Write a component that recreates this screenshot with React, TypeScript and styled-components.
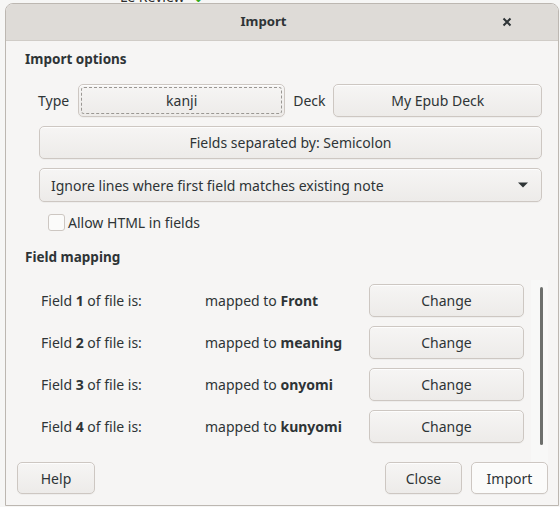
import React from "react";
import styled, { createGlobalStyle } from "styled-components";

const Global = createGlobalStyle`
  html, body { margin: 0; padding: 0; background: #f4f4f3; }
  body { font-family: "Noto Sans", "DejaVu Sans", sans-serif; font-size: 14px; color: #2e3436; }
  * { box-sizing: border-box; }
`;

const Page = styled.div`
  width: 560px;
  height: 507px;
  overflow: hidden;
  display: flex;
  flex-direction: column;
  background: #f6f6f5;
`;

const Backdrop = styled.div`
  height: 3px;
  overflow: hidden;
  padding-left: 120px;
  display: flex;
  align-items: flex-end;
  font-size: 14px;
  line-height: 14px;
  color: #2e2e2e;
`;

const BackdropText = styled.span`
  margin-bottom: -1px;
  & b { color: #33aa22; margin-left: 8px; }
`;

const Window = styled.div`
  margin-left: 5px;
  width: 554px;
  height: 503px;
  border: 1px solid #bcb7b1;
  border-radius: 8px 8px 0 0;
  background: #f6f5f4;
  display: flex;
  flex-direction: column;
  overflow: hidden;
`;

const TitleBar = styled.div`
  height: 37px;
  flex: none;
  background: #dedbd7;
  border-bottom: 1px solid #d0ccc7;
  display: flex;
  align-items: center;
  padding-bottom: 2px;
`;

const Title = styled.div`
  flex: 1;
  text-align: center;
  padding-left: 23px;
  font-weight: 700;
  font-size: 13.2px;
  color: #2e3436;
`;

const CloseBtn = styled.div`
  width: 18px;
  height: 18px;
  margin-right: 42px;
  display: flex;
  align-items: center;
  justify-content: center;
  padding-top: 2px;
`;

const Body = styled.div`
  flex: 1;
  display: flex;
  flex-direction: column;
  padding: 0 10px 0 11px;
`;

const Heading = styled.div<{ $top: number }>`
  font-weight: 700;
  font-size: 13.5px;
  line-height: 20px;
  margin: ${(p) => p.$top}px 0 0 8px;
`;

const Options = styled.div`
  display: flex;
  flex-direction: column;
  padding: 0 6px 0 22px;
  margin-top: 15px;
  gap: 9px;
`;

const Row = styled.div`
  display: flex;
  align-items: center;
`;

const Label = styled.span<{ $after: number; $before?: number }>`
  margin: 0 ${(p) => p.$after}px 0 ${(p) => p.$before ?? 0}px;
  white-space: nowrap;
`;

const Button = styled.button<{ $w?: number; $h?: number; $default?: boolean; $focus?: boolean }>`
  font: inherit;
  color: #2e3436;
  height: ${(p) => p.$h ?? 33}px;
  width: ${(p) => (p.$w ? `${p.$w}px` : "auto")};
  flex: ${(p) => (p.$w ? "none" : "1")};
  border: 1px solid #cdc7c2;
  border-radius: 5px;
  background: ${(p) => (p.$default ? "#fbfbfa" : "linear-gradient(#f6f5f4, #edebe9)")};
  box-shadow: inset 0 1px 0 rgba(255, 255, 255, 0.8), 0 1px 0 rgba(0, 0, 0, 0.03);
  padding: 0;
  position: relative;
  display: flex;
  align-items: center;
  justify-content: center;
  ${(p) =>
    p.$focus
      ? `&::after { content: ""; position: absolute; inset: 2px; border: 1px dashed #9a9793; border-radius: 3px; }`
      : ""}
`;

const Combo = styled(Button)`
  justify-content: space-between;
  padding: 0 12px 0 11px;
`;

const CheckRow = styled.label`
  display: flex;
  align-items: center;
  margin: 2px 0 0 9px;
  gap: 3px;
`;

const CheckBox = styled.span`
  width: 17px;
  height: 17px;
  border: 1px solid #cdc7c2;
  border-radius: 3px;
  background: #fbfbfa;
`;

const Mapping = styled.div`
  display: flex;
  margin-top: 17px;
  height: 173px;
`;

const MapList = styled.div`
  flex: 1;
  display: flex;
  flex-direction: column;
  gap: 9px;
  padding-left: 24px;
`;

const MapRow = styled.div`
  display: grid;
  grid-template-columns: 164px 164px 155px;
  align-items: center;
  height: 33px;
`;

const Bold = styled.b`
  font-weight: 700;
`;

const ScrollTrack = styled.div`
  width: 17px;
  margin-left: 4px;
  margin-top: -4px;
  margin-bottom: -10px;
  background: #f8f8f7;
  display: flex;
  justify-content: center;
  padding: 7px 0 0;
`;

const ScrollThumb = styled.div`
  width: 3px;
  height: 158px;
  border-radius: 2px;
  background: #6d6f6c;
  margin-left: 4px;
`;

const Footer = styled.div`
  display: flex;
  align-items: center;
  margin-top: auto;
  padding: 0 0 11px 0;
  gap: 9px;
`;

const Spacer = styled.div`
  flex: 1;
`;

const rows = [
  { n: "1", to: "Front" },
  { n: "2", to: "meaning" },
  { n: "3", to: "onyomi" },
  { n: "4", to: "kunyomi" },
];

export default function App() {
  return (
    <Page>
      <Global />
      <Backdrop>
        <BackdropText>
          Le Review<b>↓</b>
        </BackdropText>
      </Backdrop>
      <Window>
        <TitleBar>
          <Title>Import</Title>
          <CloseBtn>
            <svg width="10" height="10" viewBox="0 0 10 10">
              <path d="M1.5 1.5 L8.5 8.5 M8.5 1.5 L1.5 8.5" stroke="#2e3436" strokeWidth="2" />
            </svg>
          </CloseBtn>
        </TitleBar>
        <Body>
          <Heading $top={8}>Import options</Heading>
          <Options>
            <Row>
              <Label $after={9} $before={-1}>Type</Label>
              <Button $w={207} $focus>kanji</Button>
              <Label $after={8} $before={8}>Deck</Label>
              <Button>My Epub Deck</Button>
            </Row>
            <Row>
              <Button>Fields separated by: Semicolon</Button>
            </Row>
            <Row>
              <Combo $h={34}>
                <span>Ignore lines where first field matches existing note</span>
                <svg width="12" height="8" viewBox="0 0 12 8">
                  <path d="M1 1.5 H11 L6 6.5 Z" fill="#2e3436" />
                </svg>
              </Combo>
            </Row>
            <CheckRow>
              <CheckBox />
              <span>Allow HTML in fields</span>
            </CheckRow>
          </Options>
          <Heading $top={15}>Field mapping</Heading>
          <Mapping>
            <MapList>
              {rows.map((r) => (
                <MapRow key={r.n}>
                  <span>
                    Field <Bold>{r.n}</Bold> of file is:
                  </span>
                  <span>
                    mapped to <Bold>{r.to}</Bold>
                  </span>
                  <Button>Change</Button>
                </MapRow>
              ))}
            </MapList>
            <ScrollTrack>
              <ScrollThumb />
            </ScrollTrack>
          </Mapping>
          <Footer>
            <Button $w={78} $h={32}>Help</Button>
            <Spacer />
            <Button $w={77} $h={32}>Close</Button>
            <Button $w={77} $h={32} $default>Import</Button>
          </Footer>
        </Body>
      </Window>
    </Page>
  );
}
